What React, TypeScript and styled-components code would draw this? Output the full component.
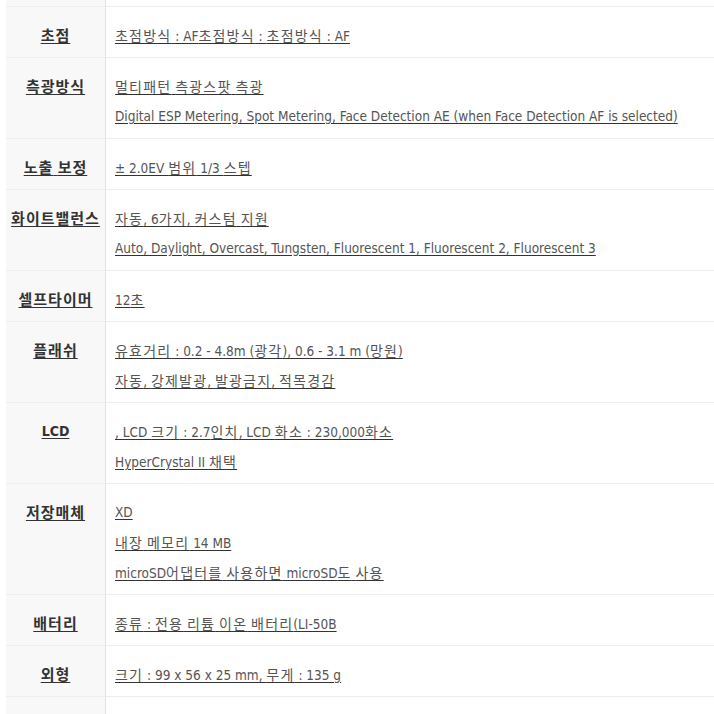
import React from "react";
import styled, { createGlobalStyle } from "styled-components";

const Global = createGlobalStyle`
  html, body { margin: 0; padding: 0; background: #fff; }
  body { font-family: "DejaVu Sans Condensed", "DejaVu Sans", "Noto Sans CJK KR", sans-serif; }
`;

const Wrap = styled.div`
  padding-left: 6px;
  overflow: hidden;
  width: 714px;
  height: 714px;
  box-sizing: border-box;
`;

const Table = styled.div`
  display: grid;
  grid-template-columns: 100px 620px;
  width: 720px;
`;

const Label = styled.div<{ $h?: number }>`
  background: #f8f8f8;
  border-right: 1px solid #e3e3e3;
  border-bottom: 1px solid #eeeeee;
  display: flex;
  align-items: flex-start;
  justify-content: center;
  box-sizing: border-box;
  padding-top: 13px;
  font-size: 14px;
  font-weight: bold;
  color: #333;
  line-height: 30px;
  ${(p) => (p.$h !== undefined ? `height: ${p.$h}px; padding: 0;` : "")}
`;

const LabelText = styled.span`
  text-decoration: underline;
  text-underline-offset: 2px;
  white-space: nowrap;
`;

const Value = styled.div<{ $h?: number }>`
  border-bottom: 1px solid #eeeeee;
  padding: 13px 0 7px 9px;
  box-sizing: border-box;
  display: flex;
  flex-direction: column;
  ${(p) => (p.$h !== undefined ? `height: ${p.$h}px; padding: 0;` : "")}
`;

const Line = styled.span`
  display: block;
  line-height: 30px;
  height: 30px;
  font-size: 13.5px;
  color: #555;
  white-space: nowrap;
`;

const Under = styled.span`
  text-decoration: underline;
  text-underline-offset: 2px;
  text-decoration-color: #333;
`;

const Ko = styled.span<{ $bold?: boolean }>`
  font-family: "Noto Sans CJK KR", sans-serif;
  font-size: ${(p) => (p.$bold ? "15px" : "14px")};
  letter-spacing: ${(p) => (p.$bold ? "1px" : "1.2px")};
`;

function Mixed({ text, bold }: { text: string; bold?: boolean }) {
  const parts = text.split(/([\uAC00-\uD7A3]+)/);
  return (
    <>
      {parts.map((p, i) =>
        /[\uAC00-\uD7A3]/.test(p) ? (
          <Ko key={i} $bold={bold}>
            {p}
          </Ko>
        ) : (
          <React.Fragment key={i}>{p}</React.Fragment>
        )
      )}
    </>
  );
}

type Row = { label: string; values: string[] };

const rows: Row[] = [
  { label: "초점", values: ["초점방식 : AF초점방식 : 초점방식 : AF"] },
  {
    label: "측광방식",
    values: [
      "멀티패턴 측광스팟 측광",
      "Digital ESP Metering, Spot Metering, Face Detection AE (when Face Detection AF is selected)",
    ],
  },
  { label: "노출 보정", values: ["± 2.0EV 범위 1/3 스텝"] },
  {
    label: "화이트밸런스",
    values: [
      "자동, 6가지, 커스텀 지원",
      "Auto, Daylight, Overcast, Tungsten, Fluorescent 1, Fluorescent 2, Fluorescent 3",
    ],
  },
  { label: "셀프타이머", values: ["12초"] },
  {
    label: "플래쉬",
    values: [
      "유효거리 : 0.2 - 4.8m (광각), 0.6 - 3.1 m (망원)",
      "자동, 강제발광, 발광금지, 적목경감",
    ],
  },
  {
    label: "LCD",
    values: [
      ", LCD 크기 : 2.7인치, LCD 화소 : 230,000화소",
      "HyperCrystal II 채택",
    ],
  },
  {
    label: "저장매체",
    values: ["XD", "내장 메모리 14 MB", "microSD어댑터를 사용하면 microSD도 사용"],
  },
  { label: "배터리", values: ["종류 : 전용 리튬 이온 배터리(LI-50B"] },
  { label: "외형", values: ["크기 : 99 x 56 x 25 mm, 무게 : 135 g"] },
  { label: "", values: [""] },
];

export default function App() {
  return (
    <Wrap>
      <Global />
      <Table>
        <Label $h={7} />
        <Value $h={7} />
        {rows.map((r, i) => (
          <React.Fragment key={i}>
            <Label>
              {r.label && (
                <LabelText>
                  <Mixed text={r.label} bold />
                </LabelText>
              )}
            </Label>
            <Value>
              {r.values.map((v, j) => (
                <Line key={j}>
                  {v && (
                    <Under>
                      <Mixed text={v} />
                    </Under>
                  )}
                </Line>
              ))}
            </Value>
          </React.Fragment>
        ))}
      </Table>
    </Wrap>
  );
}
